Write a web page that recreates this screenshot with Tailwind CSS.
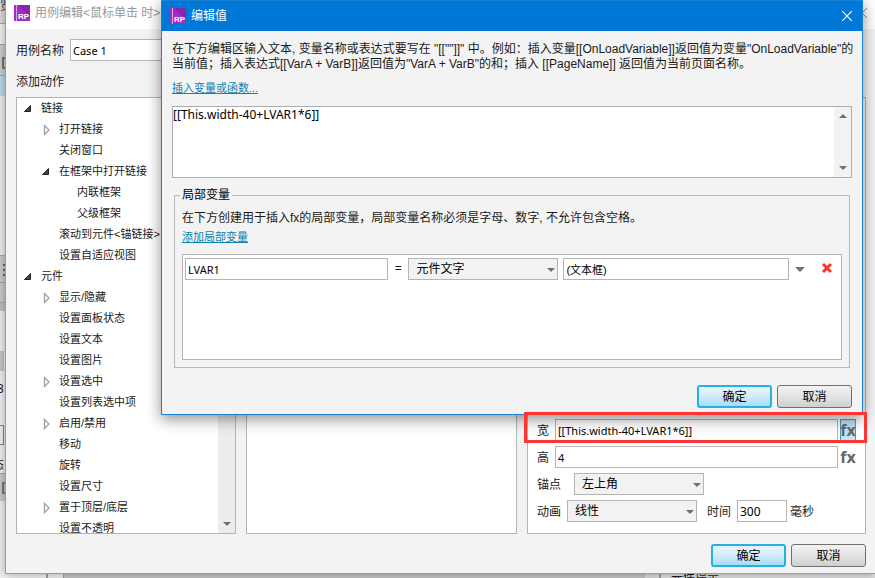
<!DOCTYPE html>
<html lang="zh-CN">
<head>
<meta charset="utf-8">
<title>用例编辑</title>
<script src="https://cdn.jsdelivr.net/npm/@tailwindcss/browser@4"></script>
</head>
<body class="relative h-screen overflow-hidden bg-[#f2f2f2] font-['Liberation_Sans','Noto_Sans_CJK_SC',sans-serif] text-xs leading-4 text-[#1a1a1a]">

<svg class="hidden" aria-hidden="true">
  <symbol id="logo" viewBox="0 0 16 16">
    <rect width="16" height="16" fill="#a32cc4"/>
    <path d="M4 0H16V12Z" fill="#8a24ab"/>
    <path d="M2.500 0V16" stroke="#d9a4e8" stroke-width="1"/>
    <text x="4" y="14" font-family="Liberation Sans, sans-serif" font-size="8" font-weight="bold" fill="#fff">RP</text>
  </symbol>
  <symbol id="open" viewBox="0 0 18 12"><path d="M7.500 2.500V8.500H1.500Z" fill="#444" stroke="#222"/></symbol>
  <symbol id="closed" viewBox="0 0 18 12"><path d="M3.500 1.500V10.500L8 6Z" fill="#fff" stroke="#a0a0a0" stroke-width="1.300"/></symbol>
  <symbol id="down" viewBox="0 0 8 4"><path d="M0 0H8L4 4Z" fill="#707070"/></symbol>
  <symbol id="up" viewBox="0 0 8 4"><path d="M0 4H8L4 0Z" fill="#707070"/></symbol>
</svg>

<!-- Application behind the dialogs -->
<div class="absolute inset-0 flex flex-col justify-between">
  <div class="flex w-12 flex-col">
    <div class="h-6 overflow-hidden border-b border-[#a8a8a8] bg-[#dcdcdc] leading-3">览</div>
    <div class="h-5 bg-[#f4f4f4]"></div>
    <div class="h-8 border-y border-[#a8a8a8] bg-[#cfcfcf] pt-3 pl-0.5"><div class="h-3 w-3 border-2 border-[#777]"></div></div>
    <div class="h-5 bg-[#bedceb]"></div>
    <div class="h-[159px] bg-[#efefef]"></div>
    <div class="h-7 border-y border-[#a8a8a8] bg-[#cccccc] pt-2 pl-[3px]"><div class="h-3 w-3 border-y-2 border-[#666] pt-[3px]"><div class="h-0.5 bg-[#666]"></div></div></div>
    <div class="h-5 border-b border-[#a8a8a8] bg-[#cccccc]"></div>
    <div class="h-2 bg-[#c4c4c4]"></div>
    <div class="h-10 bg-[#efefef]"></div>
    <div class="h-5 w-1 bg-[#c8c8c8]"></div>
    <div class="-ml-[3px] pt-2.5">3</div>
    <div class="mt-7 h-5 w-1 border border-l-0 border-[#888]"></div>
    <div class="-ml-2 mt-2 h-5 overflow-hidden pt-1">态</div>
    <div class="h-7 border-t border-[#a8a8a8] bg-[#cccccc] pt-2 pl-0.5"><div class="h-3 w-3 border-2 border-r-0 border-[#777]"></div></div>
  </div>
  <div class="flex h-2 overflow-hidden">
    <div class="w-12 border-r-2 border-[#a0a0a0]"></div>
    <div class="w-4 border-r border-[#a0a0a0]"></div>
    <div class="flex-1 bg-[#c6c6c6]"></div>
    <div class="w-4 border-r-2 border-[#a0a0a0] bg-[#dddddd]"></div>
    <div class="w-[214px] bg-[#e2e2e2] pl-2.5">元件提示</div>
  </div>
</div>

<!-- Case editor -->
<section class="absolute top-0 right-0 bottom-1 left-[5px] flex flex-col border-b border-l border-[#9c9c9c] bg-[#f3f3f3] shadow-[0_0_10px_rgba(0,0,0,0.35)]">
  <header class="flex h-[29px] items-center bg-white pr-2 pb-[3px] pl-2 text-[#999]">
    <svg class="mr-[5px] h-4 w-4"><use href="#logo"/></svg>
    <h1 class="flex-1">用例编辑&lt;鼠标单击 时&gt;</h1>
    <button aria-label="关闭用例编辑"><svg class="h-2.5 w-2.5" viewBox="0 0 10 10"><path d="M0 0L10 10M10 0L0 10" stroke="#888"/></svg></button>
  </header>
  <div class="flex min-h-0 flex-1 flex-col px-[9px] pt-2.5 pb-1.5 pl-2.5">
    <div class="flex items-center">
      <label for="case" class="w-[54px] pt-0.5">用例名称</label>
      <input id="case" value="Case 1" class="h-[22px] w-1/2 border border-[#b5b5b5] bg-white px-0.5 font-['Noto_Sans',sans-serif] text-[11px] text-black">
    </div>
    <h2 class="mt-[13px]">添加动作</h2>
    <div class="mt-[7px] grid min-h-0 flex-1 grid-cols-[220px_271fr_339fr] grid-rows-[minmax(0,1fr)] gap-2.5">
      <div class="flex border border-[#b5b5b5] bg-white">
        <ul class="min-w-0 flex-1 overflow-hidden pl-1.5 text-[11px] leading-[21px] whitespace-nowrap">
          <li class="flex items-center"><svg class="h-3 w-[18px]"><use href="#open"/></svg>链接</li>
          <li class="flex items-center pl-[18px]"><svg class="h-3 w-[18px]"><use href="#closed"/></svg>打开链接</li>
          <li class="pl-9">关闭窗口</li>
          <li class="flex items-center pl-[18px]"><svg class="h-3 w-[18px]"><use href="#open"/></svg>在框架中打开链接</li>
          <li class="pl-[54px]">内联框架</li>
          <li class="pl-[54px]">父级框架</li>
          <li class="pl-9">滚动到元件&lt;锚链接&gt;</li>
          <li class="pl-9">设置自适应视图</li>
          <li class="flex items-center"><svg class="h-3 w-[18px]"><use href="#open"/></svg>元件</li>
          <li class="flex items-center pl-[18px]"><svg class="h-3 w-[18px]"><use href="#closed"/></svg>显示/隐藏</li>
          <li class="pl-9">设置面板状态</li>
          <li class="pl-9">设置文本</li>
          <li class="pl-9">设置图片</li>
          <li class="flex items-center pl-[18px]"><svg class="h-3 w-[18px]"><use href="#closed"/></svg>设置选中</li>
          <li class="pl-9">设置列表选中项</li>
          <li class="flex items-center pl-[18px]"><svg class="h-3 w-[18px]"><use href="#closed"/></svg>启用/禁用</li>
          <li class="pl-9">移动</li>
          <li class="pl-9">旋转</li>
          <li class="pl-9">设置尺寸</li>
          <li class="flex items-center pl-[18px]"><svg class="h-3 w-[18px]"><use href="#closed"/></svg>置于顶层/底层</li>
          <li class="pl-9">设置不透明</li>
        </ul>
        <div class="flex w-[17px] flex-col items-center justify-between bg-[#ececec] py-[7px]">
          <svg class="h-1 w-2"><use href="#up"/></svg>
          <svg class="h-1 w-2"><use href="#down"/></svg>
        </div>
      </div>
      <div class="border border-[#b5b5b5] bg-white"></div>
      <div class="flex min-w-0 flex-col justify-end gap-[5px] border border-[#b5b5b5] bg-white pr-[9px] pb-[11px] pl-[9px]">
        <div class="flex items-center">
          <label for="w" class="w-[18px] pt-0.5">宽</label>
          <input id="w" value="[[This.width-40+LVAR1*6]]" class="h-[22px] min-w-0 flex-1 border border-[#b5b5b5] bg-white px-0.5 font-['Noto_Sans',sans-serif] text-[11px] text-black">
          <button aria-label="宽度公式" class="ml-0.5 h-[22px] w-4 border border-[#3c9fc6] bg-[#bfe4f4] font-['Open_Sans',sans-serif] text-base leading-5 font-bold text-[#666]"><span class="-mx-1">fx</span></button>
        </div>
        <div class="flex items-center">
          <label for="h" class="w-[18px] pt-0.5">高</label>
          <input id="h" value="4" class="h-[22px] min-w-0 flex-1 border border-[#b5b5b5] bg-white px-0.5 font-['Noto_Sans',sans-serif] text-[11px] text-black">
          <button aria-label="高度公式" class="ml-0.5 h-[22px] w-4 font-['Open_Sans',sans-serif] text-base leading-5 font-bold text-[#666]"><span class="-mx-1">fx</span></button>
        </div>
        <div class="flex items-center">
          <label for="anchor" class="w-[37px] pt-0.5">锚点</label>
          <div class="relative">
            <select id="anchor" class="block h-[22px] w-[130px] appearance-none border border-[#b5b5b5] bg-[#f2f2f2] px-[7px] text-black"><option>左上角</option></select>
            <svg class="pointer-events-none absolute top-2.5 right-[3px] h-1 w-2"><use href="#down"/></svg>
          </div>
        </div>
        <div class="flex items-center">
          <label for="anim" class="w-[30px] pt-0.5">动画</label>
          <div class="relative">
            <select id="anim" class="block h-[22px] w-[130px] appearance-none border border-[#b5b5b5] bg-[#f2f2f2] px-[7px] text-black"><option>线性</option></select>
            <svg class="pointer-events-none absolute top-2.5 right-[3px] h-1 w-2"><use href="#down"/></svg>
          </div>
          <label for="time" class="ml-2.5 w-[30px] pt-0.5">时间</label>
          <input id="time" value="300" class="h-[22px] w-[50px] border border-[#b5b5b5] bg-white px-0.5 font-['Noto_Sans',sans-serif] text-xs text-black">
          <span class="ml-[3px] pt-0.5">毫秒</span>
        </div>
      </div>
    </div>
    <div class="mt-2.5 flex justify-end gap-[5px] text-black">
      <button class="h-[23px] w-[75px] rounded-[3px] border-2 border-[#27b0e4] bg-linear-to-b from-[#eaf6fd] via-[#d0ebfa] to-[#a9dbf6]">确定</button>
      <button class="h-[23px] w-[75px] rounded-[3px] border border-[#707070] bg-linear-to-b from-[#f2f2f2] via-[#e3e3e3] to-[#cfcfcf]">取消</button>
    </div>
  </div>
</section>

<!-- Value editor -->
<section class="absolute top-0 right-3 left-[161px] border border-[#1883d7] bg-[#f3f3f3] shadow-[0_4px_14px_rgba(0,0,0,0.45)]">
  <header class="flex h-[30px] items-center bg-[#0078d7] px-2 text-white">
    <svg class="mr-[5px] h-4 w-4"><use href="#logo"/></svg>
    <h1 class="flex-1">编辑值</h1>
    <button aria-label="关闭" class="mr-0.5"><svg class="h-2.5 w-2.5" viewBox="0 0 10 10"><path d="M0 0L10 10M10 0L0 10" stroke="#fff" stroke-width="1.200"/></svg></button>
  </header>
  <div class="px-2.5 pt-[11px] pb-1.5">
    <p class="-mr-2 leading-[15px]">在下方编辑区输入文本, 变量名称或表达式要写在 "[[""]]" 中。例如：插入变量[[OnLoadVariable]]返回值为变量"OnLoadVariable"的<br>当前值；插入表达式[[VarA + VarB]]返回值为"VarA + VarB"的和；插入 [[PageName]] 返回值为当前页面名称。</p>
    <a href="#" class="mt-2 block w-fit text-[11px] text-[#0a84b0] underline">插入变量或函数...</a>
    <div class="mt-2.5 flex h-[72px] border border-[#abadb3] bg-white">
      <textarea aria-label="表达式" class="min-w-0 flex-1 resize-none overflow-hidden font-['Noto_Sans',sans-serif] text-xs leading-4 text-black outline-none">[[This.width-40+LVAR1*6]]</textarea>
      <div class="flex w-[17px] flex-col items-center justify-between bg-[#f2f2f2] py-[7px]">
        <svg class="h-1 w-2"><use href="#up"/></svg>
        <svg class="h-1 w-2"><use href="#down"/></svg>
      </div>
    </div>
    <fieldset class="mx-0.5 mt-[9px] border border-[#b9b9b9] px-[7px] pb-[7px]">
      <legend class="-ml-0.5 px-0.5 text-black">局部变量</legend>
      <p class="mt-[7px]">在下方创建用于插入fx的局部变量，局部变量名称必须是字母、数字, 不允许包含空格。</p>
      <a href="#" class="mt-[3px] block w-fit text-[11px] text-[#0a84b0] underline">添加局部变量</a>
      <div class="mt-[9px] flex h-[106px] items-start border border-[#b5b5b5] bg-white px-0.5 pt-[3px]">
        <input aria-label="变量名" value="LVAR1" class="h-[22px] min-w-0 flex-[204] border border-[#b5b5b5] bg-white px-0.5 font-['Noto_Sans',sans-serif] text-[11px] text-black">
        <span class="w-5 text-center leading-5">=</span>
        <div class="relative">
          <select aria-label="变量类型" class="block h-[22px] w-[150px] appearance-none border border-[#b5b5b5] bg-[#f2f2f2] px-[7px] text-black"><option>元件文字</option></select>
          <svg class="pointer-events-none absolute top-2.5 right-[3px] h-1 w-2"><use href="#down"/></svg>
        </div>
        <input aria-label="目标元件" value="(文本框)" class="ml-[5px] h-[22px] min-w-0 flex-[227] border border-[#b5b5b5] bg-white px-0.5 text-[11px] text-black">
        <button aria-label="选择元件" class="ml-1.5 flex h-[22px] w-2.5 items-center"><svg class="h-[5px] w-2.5"><use href="#down"/></svg></button>
        <button aria-label="删除" class="mr-1.5 ml-4 flex h-5 w-3 items-center"><svg class="h-3 w-3" viewBox="0 0 12 12"><path d="M2 2L10 10M10 2L2 10" stroke="#f5372c" stroke-width="3"/></svg></button>
      </div>
    </fieldset>
    <div class="mt-[17px] flex justify-end gap-[5px] text-black">
      <button class="h-[23px] w-[75px] rounded-[3px] border-2 border-[#27b0e4] bg-linear-to-b from-[#eaf6fd] via-[#d0ebfa] to-[#a9dbf6]">确定</button>
      <button class="h-[23px] w-[75px] rounded-[3px] border border-[#707070] bg-linear-to-b from-[#f2f2f2] via-[#e3e3e3] to-[#cfcfcf]">取消</button>
    </div>
  </div>
</section>

<!-- Highlight around the width row -->
<div class="pointer-events-none absolute right-2 bottom-[135px] left-[524px] h-[31px] border-3 border-[#ff3535]"></div>

</body>
</html>
